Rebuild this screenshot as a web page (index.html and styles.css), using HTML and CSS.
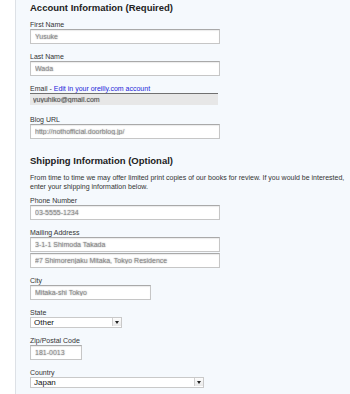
FILE: index.html
```html
<!DOCTYPE html>
<html lang="en">
<head>
    <meta charset="UTF-8">
    <meta name="viewport" content="width=device-width, initial-scale=1.0">
    <title>Account Settings</title>
    <link rel="stylesheet" href="styles.css">
</head>
<body>
    <div class="page">
        <h2 class="section-title">Account Information (Required)</h2>

        <div class="field">
            <label>First Name</label>
            <input type="text" class="text-input wide blurred" value="Yusuke">
        </div>

        <div class="field">
            <label>Last Name</label>
            <input type="text" class="text-input wide blurred" value="Wada">
        </div>

        <div class="field email-field">
            <label>Email - <a href="#">Edit in your oreilly.com account</a></label>
            <input type="text" class="text-input email-input" value="yuyuhiko@gmail.com" disabled>
        </div>

        <div class="field">
            <label>Blog URL</label>
            <input type="text" class="text-input wide blurred" value="http://nothofficial.doorblog.jp/">
        </div>

        <h2 class="section-title shipping-title">Shipping Information (Optional)</h2>
        <p class="intro">From time to time we may offer limited print copies of our books for review. If you would be interested, enter your shipping information below.</p>

        <div class="field">
            <label>Phone Number</label>
            <input type="text" class="text-input wide blurred" value="03-5555-1234">
        </div>

        <div class="field">
            <label>Mailing Address</label>
            <input type="text" class="text-input wide blurred" value="3-1-1 Shimoda Takada">
            <input type="text" class="text-input wide blurred second-line" value="#7 Shimorenjaku Mitaka, Tokyo Residence">
        </div>

        <div class="field">
            <label>City</label>
            <input type="text" class="text-input city blurred" value="Mitaka-shi Tokyo">
        </div>

        <div class="field">
            <label>State</label>
            <div class="select-wrap state">
                <select class="select-input">
                    <option>Other</option>
                </select>
                <span class="select-arrow"></span>
            </div>
        </div>

        <div class="field">
            <label>Zip/Postal Code</label>
            <input type="text" class="text-input zip blurred" value="181-0013">
        </div>

        <div class="field">
            <label>Country</label>
            <div class="select-wrap country">
                <select class="select-input">
                    <option>Japan</option>
                </select>
                <span class="select-arrow"></span>
            </div>
        </div>
    </div>
</body>
</html>
```

FILE: styles.css
```css
html, body {
    margin: 0;
    background: #fff;
    overflow: hidden;
}

body {
    font-family: "Liberation Sans", Arial, sans-serif;
    color: #333;
}

.page {
    margin-left: 15px;
    border-left: 1px solid #dde1e6;
    background: #f5f9fd;
    padding: 2px 0 0 14px;
    min-height: 100vh;
}

.section-title {
    margin: 0;
    font-size: 9.5px;
    line-height: 12px;
    font-weight: bold;
    color: #222;
}

.shipping-title {
    margin-top: 16px;
}

.intro {
    width: 318px;
    margin: 6px 0 0;
    font-size: 7px;
    line-height: 9px;
    color: #333;
}

.field {
    margin-top: 6px;
}

.field + .field {
    margin-top: 8px;
}

.intro + .field {
    margin-top: 5px;
}

.field label {
    display: block;
    font-size: 7px;
    line-height: 9px;
    color: #333;
}

.field label a {
    color: #2323d8;
    text-decoration: none;
}

.text-input {
    display: block;
    box-sizing: border-box;
    height: 15px;
    margin: 0;
    padding: 0 4px;
    font-family: "Liberation Sans", Arial, sans-serif;
    font-size: 7px;
    color: #444;
    background: #fff;
    border: 1px solid #c6c6c6;
    border-top-color: #a9a9a9;
    box-shadow: inset 0 1px 1px rgba(0, 0, 0, 0.08);
    outline: none;
}

.blurred {
    color: rgba(110, 110, 110, 0.7);
    text-shadow: 0 0 1.5px rgba(0, 0, 0, 0.45);
}

.wide {
    width: 190px;
}

.second-line {
    margin-top: 1px;
}

.city {
    width: 121px;
}

.zip {
    width: 52px;
}

.email-input {
    width: 188px;
    height: 12px;
    padding: 0 3px;
    color: #555;
    background: #e7e7e7;
    border: none;
    border-top: 1px solid #707070;
    box-shadow: none;
    text-shadow: 0 0 1px rgba(0, 0, 0, 0.35);
}

.email-field + .field {
    margin-top: 10px;
}

.select-wrap {
    position: relative;
    height: 11px;
}

.select-wrap.state {
    width: 92px;
}

.select-wrap.country {
    width: 174px;
}

.select-input {
    appearance: none;
    -webkit-appearance: none;
    display: block;
    box-sizing: border-box;
    width: 100%;
    height: 11px;
    margin: 0;
    padding: 0 3px;
    font-family: "Liberation Sans", Arial, sans-serif;
    font-size: 8px;
    line-height: 9px;
    color: #111;
    background: #fff;
    border: 1px solid #c9c9c9;
    border-radius: 0;
    outline: none;
}

.select-arrow {
    position: absolute;
    top: 1px;
    right: 1px;
    width: 8px;
    height: 8px;
    border-left: 1px solid #d0d0d0;
    background: linear-gradient(#fdfdfd, #e9e9e9);
}

.select-arrow::after {
    content: "";
    position: absolute;
    left: 2px;
    top: 3px;
    border-left: 2px solid transparent;
    border-right: 2px solid transparent;
    border-top: 3px solid #222;
}
```
